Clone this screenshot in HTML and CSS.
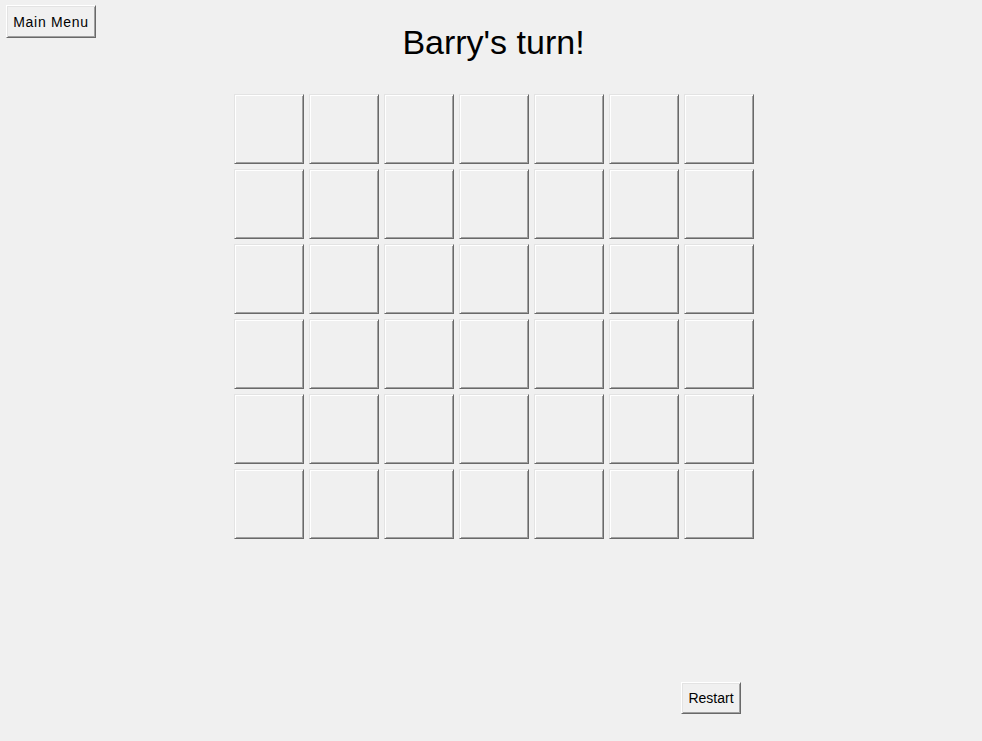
FILE: index.html
```html
<!DOCTYPE html>
<html>
<head>
<meta charset="utf-8">
<link rel="stylesheet" href="styles.css">
</head>
<body>
<div class="top">
  <button class="btn menu">Main Menu</button>
  <h1 class="title">Barry's turn!</h1>
  <div></div>
</div>
<div class="board">
  <div class="cell"></div><div class="cell"></div><div class="cell"></div><div class="cell"></div><div class="cell"></div><div class="cell"></div><div class="cell"></div>
  <div class="cell"></div><div class="cell"></div><div class="cell"></div><div class="cell"></div><div class="cell"></div><div class="cell"></div><div class="cell"></div>
  <div class="cell"></div><div class="cell"></div><div class="cell"></div><div class="cell"></div><div class="cell"></div><div class="cell"></div><div class="cell"></div>
  <div class="cell"></div><div class="cell"></div><div class="cell"></div><div class="cell"></div><div class="cell"></div><div class="cell"></div><div class="cell"></div>
  <div class="cell"></div><div class="cell"></div><div class="cell"></div><div class="cell"></div><div class="cell"></div><div class="cell"></div><div class="cell"></div>
  <div class="cell"></div><div class="cell"></div><div class="cell"></div><div class="cell"></div><div class="cell"></div><div class="cell"></div><div class="cell"></div>
</div>
<div class="bottom">
  <button class="btn restart">Restart</button>
</div>
</body>
</html>
```
FILE: styles.css
```css
html, body {
  margin: 0;
  padding: 0;
  background: #f0f0f0;
  width: 982px;
  height: 741px;
  overflow: hidden;
  font-family: "Liberation Sans", Arial, sans-serif;
}
.top {
  display: grid;
  grid-template-columns: 1fr auto 1fr;
  height: 94px;
}
.btn {
  box-sizing: border-box;
  background: #f0f0f0;
  color: #000;
  font-family: "Liberation Sans", Arial, sans-serif;
  font-size: 14px;
  padding: 0;
  margin: 0;
  border-top: 1px solid #ffffff;
  border-left: 1px solid #ffffff;
  border-right: 1px solid #696969;
  border-bottom: 1px solid #696969;
  box-shadow: inset 1px 1px #e3e3e3, inset -1px -1px #a0a0a0;
  border-radius: 0;
}
.menu {
  justify-self: start;
  align-self: start;
  width: 90px;
  height: 33px;
  margin: 5px 0 0 6px;
  letter-spacing: 0.7px;
}
.title {
  margin: 23px 0 0 0;
  align-self: start;
  font-weight: normal;
  font-size: 34px;
  line-height: 39px;
  color: #000;
  padding-left: 5px;
}
.board {
  display: grid;
  grid-template-columns: repeat(7, 70px);
  grid-auto-rows: 70px;
  gap: 5px;
  margin-left: 234px;
  width: 520px;
}
.cell {
  box-sizing: border-box;
  background: #f0f0f0;
  border-top: 1px solid #e3e3e3;
  border-left: 1px solid #e3e3e3;
  border-right: 1px solid #696969;
  border-bottom: 1px solid #696969;
  box-shadow: inset 1px 1px #ffffff, inset -1px -1px #a0a0a0;
}
.bottom {
  display: flex;
  padding-left: 681px;
  margin-top: 143px;
}
.restart {
  width: 60px;
  height: 32px;
}
```
